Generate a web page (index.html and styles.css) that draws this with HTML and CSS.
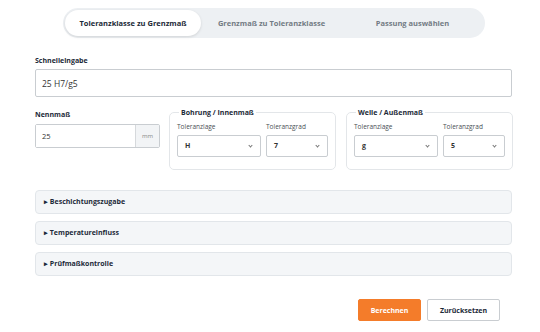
FILE: index.html
```html
<!DOCTYPE html>
<html>
	<head>
		<meta charset="UTF-8">
		<title>Toleranzrechner</title>
		<link rel="stylesheet" href="styles.css">
	</head>
	<body>
		<div class="calc">
			<div class="tabs">
				<a href="javascript:;" class="tab active">Toleranzklasse zu Grenzmaß</a>
				<a href="javascript:;" class="tab">Grenzmaß zu Toleranzklasse</a>
				<a href="javascript:;" class="tab">Passung auswählen</a>
			</div>

			<label class="label">Schnelleingabe</label>
			<input class="quick" type="text" value="25 H7/g5">

			<div class="row">
				<div class="nominal">
					<label class="label">Nennmaß</label>
					<div class="unit-input">
						<input type="text" value="25">
						<span class="unit">mm</span>
					</div>
				</div>
				<fieldset class="group">
					<legend>Bohrung / Innenmaß</legend>
					<div class="pair">
						<div>
							<label class="small">Toleranzlage</label>
							<div class="select">H</div>
						</div>
						<div>
							<label class="small">Toleranzgrad</label>
							<div class="select">7</div>
						</div>
					</div>
				</fieldset>
				<fieldset class="group">
					<legend>Welle / Außenmaß</legend>
					<div class="pair">
						<div>
							<label class="small">Toleranzlage</label>
							<div class="select">g</div>
						</div>
						<div>
							<label class="small">Toleranzgrad</label>
							<div class="select">5</div>
						</div>
					</div>
				</fieldset>
			</div>

			<div class="panels">
				<div class="panel">&#9656; Beschichtungszugabe</div>
				<div class="panel">&#9656; Temperatureinfluss</div>
				<div class="panel">&#9656; Prüfmaßkontrolle</div>
			</div>

			<div class="actions">
				<a href="javascript:;" class="btn primary">Berechnen</a>
				<a href="javascript:;" class="btn">Zurücksetzen</a>
			</div>
		</div>
	</body>
</html>
```

FILE: styles.css
```css
body {
	margin: 0;
	background: #fff;
	font-family: "Open Sans", "Liberation Sans", sans-serif;
	color: #1c2a38;
}

.calc {
	width: 477px;
	padding: 8px 28px 0 35px;
}

.tabs {
	display: flex;
	width: 418px;
	height: 26px;
	margin: 0 auto 0 28px;
	padding: 2px;
	background: #edf0f3;
	border-radius: 15px;
}

.tab {
	flex: 1;
	display: flex;
	align-items: center;
	justify-content: center;
	border-radius: 13px;
	font-size: 7.5px;
	font-weight: 700;
	color: #737b84;
	text-decoration: none;
}

.tab.active {
	flex: 0 0 136px;
	background: #fff;
	color: #1c2a38;
	box-shadow: 0 1px 3px rgba(0, 0, 0, .12);
}

.label {
	display: block;
	font-size: 7px;
	font-weight: 700;
	line-height: 10px;
}

.calc > .label {
	margin-top: 18px;
	margin-bottom: 3px;
}

.quick {
	display: block;
	box-sizing: border-box;
	width: 477px;
	height: 28px;
	padding: 0 6px;
	border: 1px solid #c9cdd1;
	border-radius: 2px;
	font-family: inherit;
	font-size: 8.5px;
	color: #333;
	outline: none;
}

.row {
	display: flex;
	gap: 9px;
	margin-top: 11px;
}

.nominal {
	width: 125px;
	padding-top: 2px;
}

.nominal .label {
	margin-bottom: 4px;
}

.unit-input {
	display: flex;
	height: 22px;
	border: 1px solid #c9cdd1;
	border-radius: 2px;
}

.unit-input input {
	flex: 1;
	min-width: 0;
	border: 0;
	padding: 0 6px;
	font-family: inherit;
	font-size: 7.5px;
	color: #333;
	outline: none;
}

.unit {
	width: 23px;
	display: flex;
	align-items: center;
	justify-content: center;
	border-left: 1px solid #d6d9dc;
	background: #f2f4f6;
	font-size: 6px;
	color: #888;
}

.group {
	flex: 1;
	margin: 0;
	padding: 0 7px 12px 7px;
	border: 1px solid #e3e6e9;
	border-radius: 5px;
}

.group:last-child {
	margin-left: 1px;
}

.group legend {
	padding: 0 2px;
	margin-left: 2px;
	font-size: 7px;
	font-weight: 700;
}

.pair {
	display: grid;
	grid-template-columns: 84px 62px;
	gap: 5px;
	margin-top: 5px;
}

.small {
	display: block;
	font-size: 6.5px;
	color: #4a4f55;
	line-height: 9px;
	margin-bottom: 4px;
}

.select {
	position: relative;
	box-sizing: border-box;
	height: 22px;
	line-height: 20px;
	padding: 0 7px;
	border: 1px solid #c9cdd1;
	border-radius: 2px;
	font-size: 7px;
	font-weight: 700;
	color: #333;
}

.select::after {
	content: "";
	position: absolute;
	right: 8px;
	top: 8px;
	width: 2px;
	height: 2px;
	border-right: 1px solid #777;
	border-bottom: 1px solid #777;
	transform: rotate(45deg);
}

.panels {
	display: flex;
	flex-direction: column;
	gap: 7px;
	margin-top: 20px;
}

.panel {
	height: 22px;
	line-height: 22px;
	padding: 0 8px;
	background: #f4f6f8;
	border: 1px solid #e2e6ea;
	border-radius: 4px;
	font-size: 7px;
	font-weight: 700;
}

.actions {
	display: flex;
	justify-content: flex-end;
	gap: 6px;
	margin: 23px 12px 0 0;
}

.btn {
	display: flex;
	align-items: center;
	justify-content: center;
	box-sizing: border-box;
	height: 22px;
	width: 73px;
	border: 1px solid #c9cdd1;
	border-radius: 2px;
	background: #fff;
	font-size: 7px;
	font-weight: 700;
	color: #1c2a38;
	text-decoration: none;
}

.btn.primary {
	width: 63px;
	background: #f47c2a;
	border-color: #f47c2a;
	color: #fff;
}
```
